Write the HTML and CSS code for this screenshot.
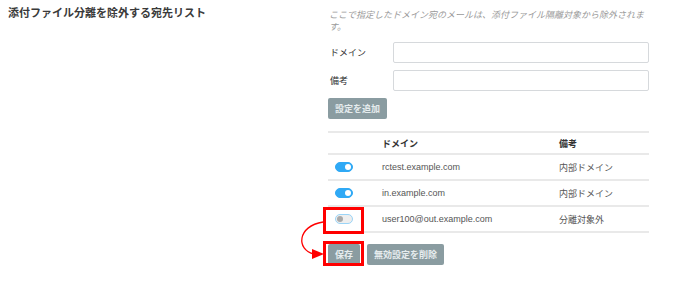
FILE: index.html
```html
<!DOCTYPE html>
<html lang="ja">
<head>
    <meta charset="UTF-8">
    <title>添付ファイル分離を除外する宛先リスト</title>
    <link rel="stylesheet" href="styles.css">
</head>
<body>
    <div class="page">
        <div class="side">
            <h2 class="title">添付ファイル分離を除外する宛先リスト</h2>
        </div>

        <div class="main">
            <p class="desc">ここで指定したドメイン宛のメールは、添付ファイル隔離対象から除外されます。</p>

            <form class="add-form">
                <div class="field">
                    <label for="domain">ドメイン</label>
                    <input type="text" id="domain" class="field-input">
                </div>
                <div class="field">
                    <label for="note">備考</label>
                    <input type="text" id="note" class="field-input">
                </div>
                <button type="button" class="btn">設定を追加</button>
            </form>

            <table class="list">
                <thead>
                    <tr>
                        <th class="col-switch"></th>
                        <th class="col-domain">ドメイン</th>
                        <th>備考</th>
                    </tr>
                </thead>
                <tbody>
                    <tr>
                        <td class="col-switch"><span class="switch on"></span></td>
                        <td class="col-domain">rctest.example.com</td>
                        <td>内部ドメイン</td>
                    </tr>
                    <tr>
                        <td class="col-switch"><span class="switch on"></span></td>
                        <td class="col-domain">in.example.com</td>
                        <td>内部ドメイン</td>
                    </tr>
                    <tr>
                        <td class="col-switch"><span class="switch"></span></td>
                        <td class="col-domain">user100@out.example.com</td>
                        <td>分離対象外</td>
                    </tr>
                </tbody>
            </table>

            <div class="actions">
                <button type="button" class="btn btn-save">保存</button>
                <button type="button" class="btn">無効設定を削除</button>
            </div>
        </div>
    </div>

    <!-- annotation overlay -->
    <svg class="marks" width="698" height="307" viewBox="0 0 698 307">
        <rect x="324.5" y="208.5" width="38" height="24" fill="none" stroke="#ff0000" stroke-width="3"/>
        <rect x="324.5" y="242.5" width="38" height="22" fill="none" stroke="#ff0000" stroke-width="3"/>
        <path d="M323 222 C 297 226, 296 250, 314 254" fill="none" stroke="#ff0000" stroke-width="1.3"/>
        <polygon points="324,254 312,249 312,259" fill="#ff0000"/>
    </svg>
</body>
</html>
```

FILE: styles.css
```css
body {
    margin: 0;
    background-color: #fff;
    font-family: "Liberation Sans", "Noto Sans CJK JP", sans-serif;
    color: #333;
}
.page {
    display: flex;
    padding: 9px 0 0 8px;
}
.side {
    width: 320px;
}
.title {
    margin: -3px 0 0 0;
    font-size: 11px;
    line-height: 14px;
    font-weight: bold;
    color: #3a3a3a;
}
.main {
    width: 321px;
}
.desc {
    margin: 0 0 9px 1px;
    font-size: 9px;
    line-height: 12px;
    font-style: italic;
    color: #9a9a9a;
}
/* form */
.field {
    display: flex;
    align-items: center;
    margin-bottom: 7px;
}
.field label {
    width: 65px;
    padding-left: 2px;
    box-sizing: border-box;
    font-size: 9px;
    color: #333;
}
.field-input {
    width: 256px;
    height: 21px;
    box-sizing: border-box;
    border: 1px solid #d6d9dc;
    border-radius: 2px;
    padding: 2px 5px;
    font-size: 9px;
}
.btn {
    height: 21px;
    padding: 0 7px;
    border: none;
    border-radius: 2px;
    background-color: #8a9ca1;
    color: #e6ecee;
    font-family: inherit;
    font-size: 9px;
    font-weight: bold;
    cursor: pointer;
}
/* table */
.list {
    width: 321px;
    margin-top: 12px;
    border-collapse: collapse;
    font-size: 9px;
}
.list th,
.list td {
    text-align: left;
    padding: 0 0 0 7px;
    border-top: 2px solid #e9e9e9;
    border-bottom: 2px solid #e9e9e9;
}
.list th {
    height: 20px;
    font-weight: bold;
    color: #333;
}
.list td {
    height: 24px;
    color: #555;
}
.col-switch {
    width: 40px;
}
.col-domain {
    width: 170px;
}
.switch {
    display: block;
    position: relative;
    width: 18px;
    height: 10px;
    box-sizing: border-box;
    border-radius: 5px;
    background-color: #eeeeee;
    border: 1px solid #9ad4f7;
}
.switch::after {
    content: "";
    position: absolute;
    top: 1px;
    left: 1px;
    width: 6px;
    height: 6px;
    border-radius: 50%;
    background-color: #a9a9a9;
}
.switch.on {
    background-color: #2fa9f5;
    border-color: #2fa9f5;
}
.switch.on::after {
    left: 9px;
    background-color: #fff;
}
/* buttons under the table */
.actions {
    display: flex;
    gap: 7px;
    margin-top: 11px;
}
.btn-save {
    width: 32px;
    padding: 0;
}
.marks {
    position: absolute;
    top: 0;
    left: 0;
    pointer-events: none;
}
```
